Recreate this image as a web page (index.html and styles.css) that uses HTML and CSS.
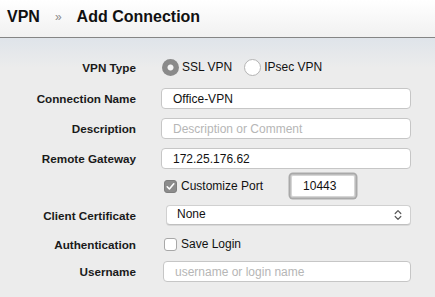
FILE: index.html
```html
<!DOCTYPE html>
<html>
<head>
<meta charset="utf-8">
<link rel="stylesheet" href="styles.css">
</head>
<body>
<header class="hdr">
  <span class="crumb">VPN</span>
  <span class="sep">»</span>
  <span class="crumb">Add Connection</span>
</header>
<main class="form">
  <div class="row r1">
    <label class="lbl">VPN Type</label>
    <div class="ctl radios">
      <span class="radio on"></span><span class="rtext">SSL VPN</span>
      <span class="radio off"></span><span class="rtext">IPsec VPN</span>
    </div>
  </div>
  <div class="row r2">
    <label class="lbl">Connection Name</label>
    <div class="ctl"><div class="input">Office-VPN</div></div>
  </div>
  <div class="row r3">
    <label class="lbl">Description</label>
    <div class="ctl"><div class="input ph">Description or Comment</div></div>
  </div>
  <div class="row r4">
    <label class="lbl">Remote Gateway</label>
    <div class="ctl"><div class="input">172.25.176.62</div></div>
  </div>
  <div class="row r5">
    <label class="lbl"></label>
    <div class="ctl port">
      <span class="check on"><svg width="13" height="13" viewBox="0 0 13 13"><path d="M3.2 6.8 L5.4 9 L9.8 3.8" fill="none" stroke="#fff" stroke-width="1.6" stroke-linecap="round" stroke-linejoin="round"/></svg></span>
      <span class="ctext">Customize Port</span>
      <div class="portbox">10443</div>
    </div>
  </div>
  <div class="row r6">
    <label class="lbl">Client Certificate</label>
    <div class="ctl"><div class="select"><span>None</span><svg class="arrows" width="8" height="12" viewBox="0 0 8 12"><path d="M1.2 4.5 L4 1.7 L6.8 4.5 M1.2 7.5 L4 10.3 L6.8 7.5" fill="none" stroke="#555" stroke-width="1.2" stroke-linecap="round" stroke-linejoin="round"/></svg></div></div>
  </div>
  <div class="row r7">
    <label class="lbl">Authentication</label>
    <div class="ctl port"><span class="check off"></span><span class="ctext">Save Login</span></div>
  </div>
  <div class="row r8">
    <label class="lbl">Username</label>
    <div class="ctl"><div class="input ph user">username or login name</div></div>
  </div>
</main>
</body>
</html>
```
FILE: styles.css
```css
* { box-sizing: border-box; }
html, body { margin: 0; padding: 0; }
body {
  width: 435px;
  height: 297px;
  overflow: hidden;
  background: #ececec;
  font-family: "Liberation Sans", Arial, sans-serif;
  font-size: 12px;
  color: #111;
}
.hdr {
  height: 38px;
  background: linear-gradient(#ffffff, #f1f1f1);
  border-bottom: 1px solid #858585;
  display: flex;
  align-items: center;
  padding: 0 0 4px 7px;
}
.crumb {
  font-size: 16px;
  font-weight: bold;
  color: #111;
}
.sep {
  color: #8a8a8a;
  font-size: 12px;
  margin: 0 15px 0 15px;
}
.form {
  height: 259px;
  background: linear-gradient(#dfe4ea, #ececec 30px);
  padding: 18px 0 0 8px;
  display: flex;
  flex-direction: column;
}
.row {
  display: flex;
  align-items: center;
}
.lbl {
  width: 128px;
  text-align: right;
  font-weight: bold;
  font-size: 11.7px;
  color: #1a1a1a;
  flex: none;
}
.ctl {
  margin-left: 25px;
  width: 250px;
  display: flex;
  align-items: center;
}
.r1 { height: 22px; }
.r2 { height: 21px; margin-top: 10px; }
.r3 { height: 21px; margin-top: 9px; }
.r4 { height: 21px; margin-top: 9px; }
.r5 { height: 24px; margin-top: 5px; }
.r6 { height: 20px; margin-top: 7px; }
.r7 { height: 18px; margin-top: 10px; }
.r8 { height: 21px; margin-top: 8px; }

.radio {
  width: 17px;
  height: 17px;
  border-radius: 50%;
  flex: none;
  margin-left: 1px;
}
.radio.on {
  background: radial-gradient(circle, #f4f4f4 0 2.6px, #8a8a8a 3.4px);
}
.radio.off {
  background: #fff;
  border: 1px solid #b4b4b4;
  margin-left: 12px;
}
.rtext { margin-left: 3px; }

.input {
  width: 250px;
  height: 21px;
  background: #fff;
  border: 1px solid #c6c6c6;
  border-radius: 4px;
  padding-left: 11px;
  display: flex;
  align-items: center;
  color: #111;
}
.input.ph { color: #b6b6b6; }
.input.user { margin-left: 2px; width: 249px; }

.port { height: 24px; }
.check {
  width: 13px;
  height: 13px;
  border-radius: 3px;
  flex: none;
  margin-left: 3px;
  display: block;
}
.check svg { display: block; }
.check.on { background: #8c8c8c; border: 1px solid #7e7e7e; }
.check.on svg { margin: -1px; }
.check.off { background: #fff; border: 1px solid #a8a8a8; }
.ctext { margin-left: 4px; }
.portbox {
  margin-left: 27px;
  width: 66px;
  height: 24px;
  background: #fff;
  border: 1px solid #bdbdbd;
  border-radius: 3px;
  box-shadow: 0 0 0 1.5px #a9a9a9, inset 0 0 0 1px #d6d6d6;
  padding-left: 12px;
  display: flex;
  align-items: center;
}

.select {
  margin-left: 5px;
  width: 246px;
  height: 20px;
  background: #fff;
  border: 1px solid #d0d0d0;
  border-bottom-color: #c0c0c0;
  border-radius: 4px;
  box-shadow: 0 1px 0 #d8d8d8;
  padding: 0 8px 0 10px;
  display: flex;
  align-items: center;
  justify-content: space-between;
}
.select span { margin-top: -2px; }
.arrows { display: block; }
```
